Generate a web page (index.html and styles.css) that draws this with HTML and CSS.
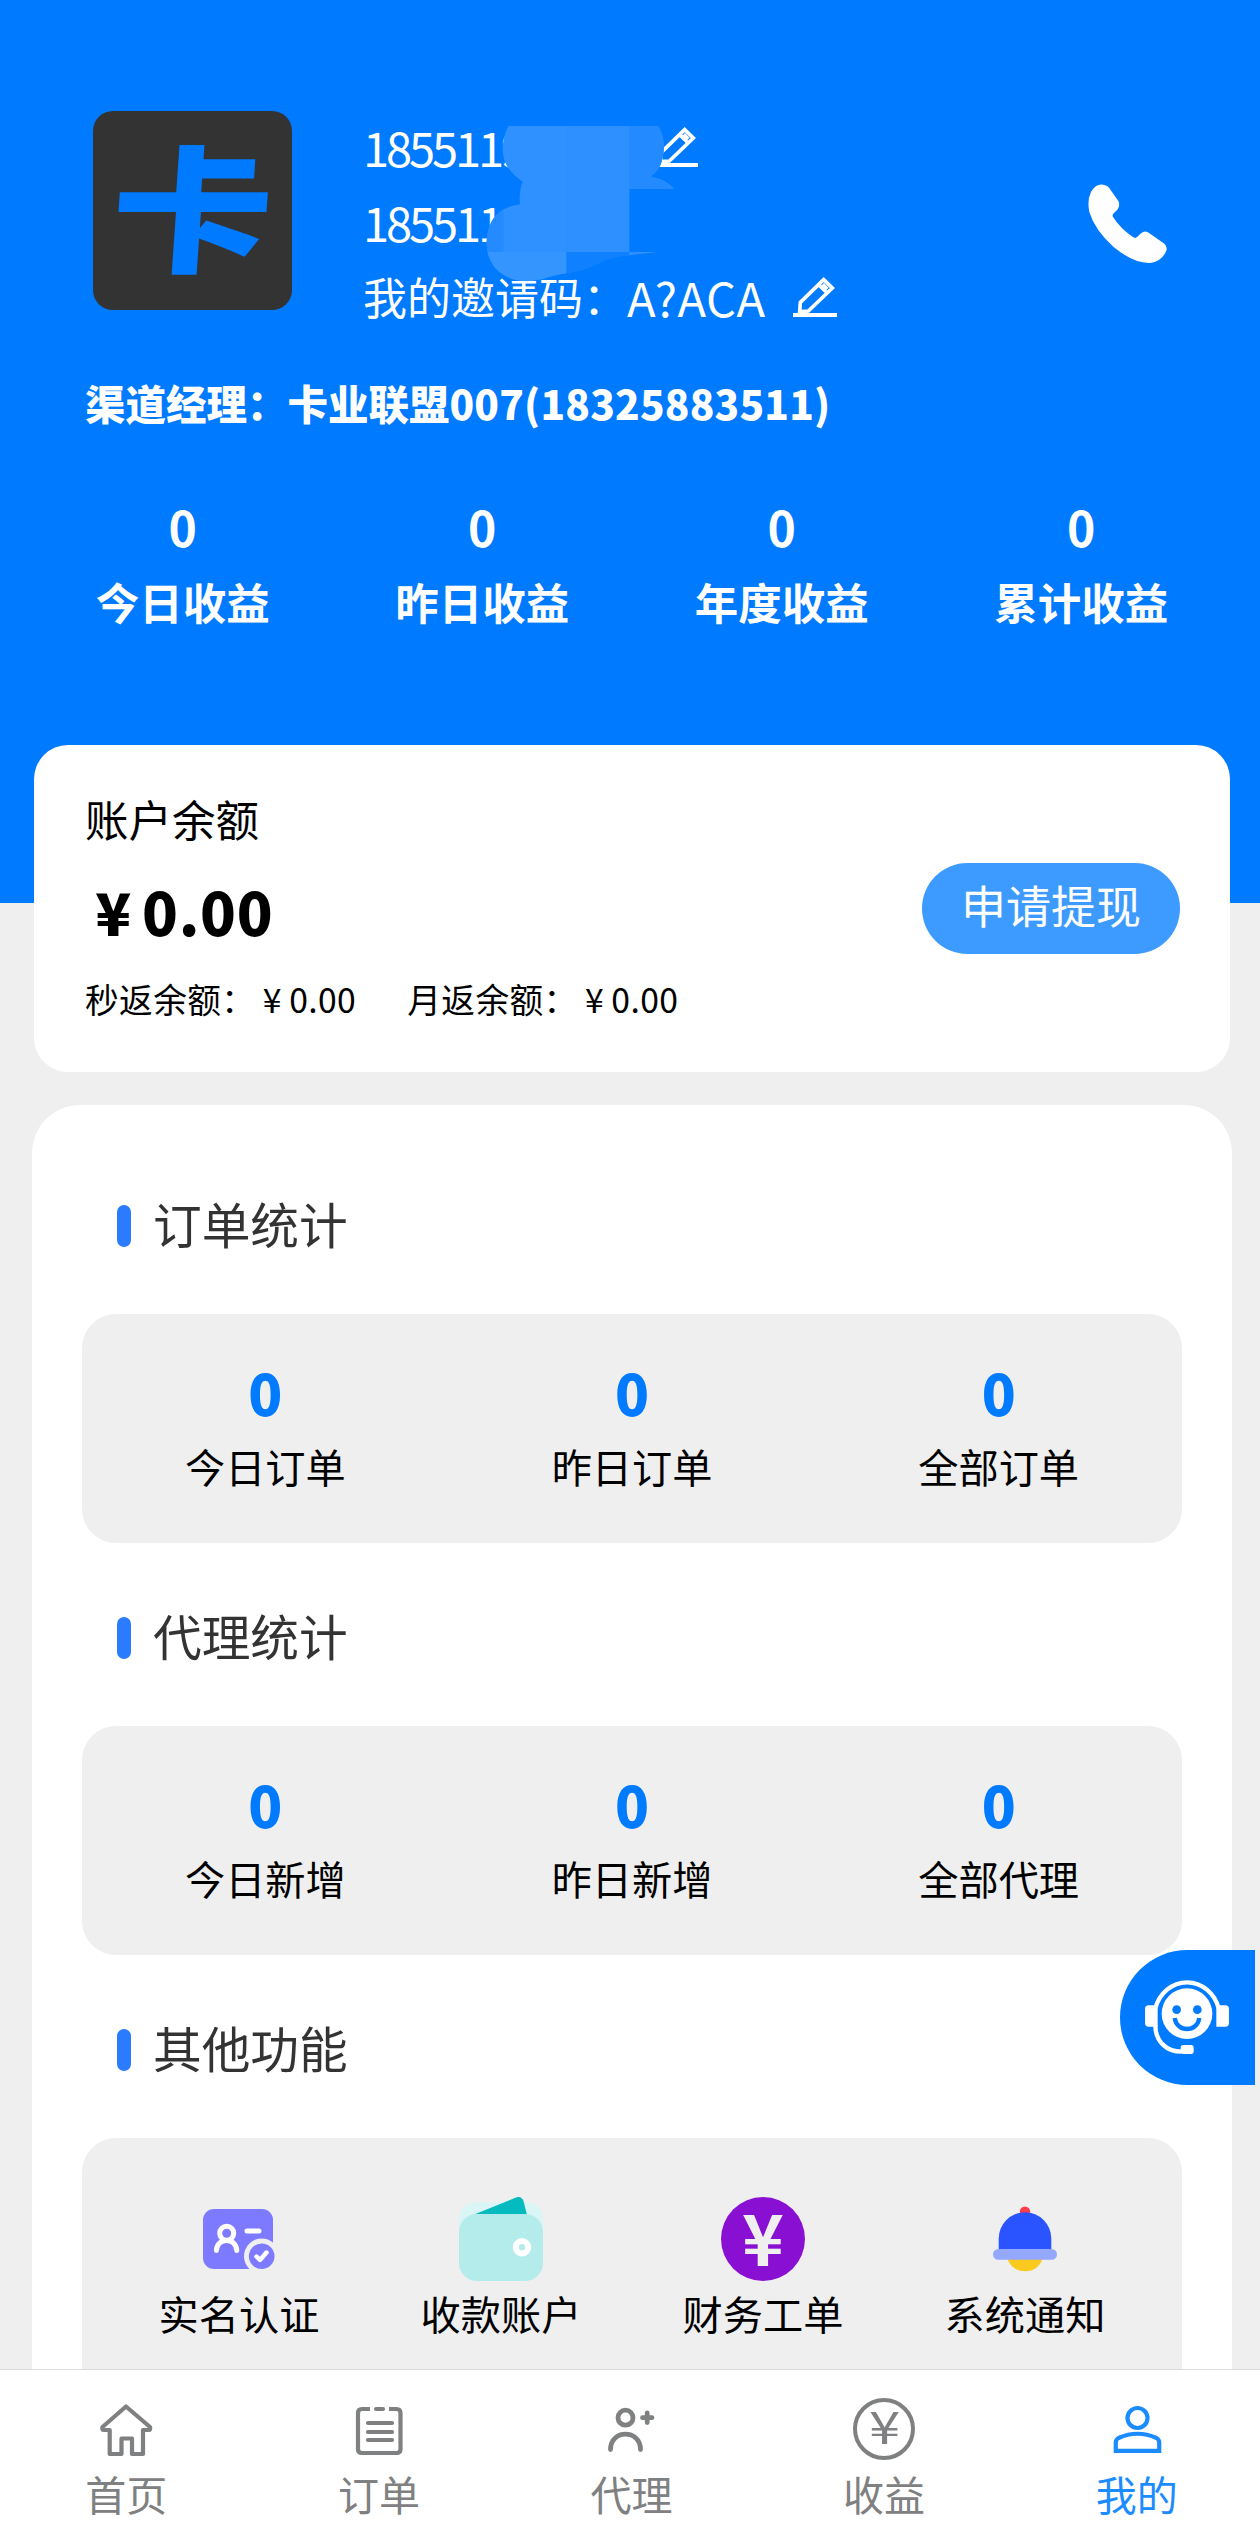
FILE: index.html
```html
<!DOCTYPE html>
<html lang="zh-CN">
<head>
    <meta charset="UTF-8">
    <meta name="viewport" content="width=device-width, initial-scale=1.0">
    <title>我的</title>
    <link rel="stylesheet" href="styles.css">
</head>
<body>

<div class="page">
    <header class="header">
        <div class="profile">
            <div class="avatar"><span>卡</span></div>
            <div class="info">
                <div class="info-line">
                    <span class="phone-text">1855119</span>
                    <svg class="edit" viewBox="0 0 132 120"><path d="M92 8L118 33L46 102L20 104L22 76ZM77 23L103 48M89 22L103 36" fill="none" stroke="#fff" stroke-width="11"/><rect y="108" width="132" height="12" fill="#fff"/></svg>
                </div>
                <div class="info-line"><span class="phone-text">185511</span></div>
                <div class="info-line">
                    <span>我的邀请码：</span><span class="code">A?ACA</span>
                    <svg class="edit" viewBox="0 0 132 120"><path d="M92 8L118 33L46 102L20 104L22 76ZM77 23L103 48M89 22L103 36" fill="none" stroke="#fff" stroke-width="11"/><rect y="108" width="132" height="12" fill="#fff"/></svg>
                </div>
                <!-- hides part of the phone number -->
                <svg class="mask" viewBox="80 108 570 468">
                    <clipPath id="blob"><path d="M147 108H597Q625 155 607 215Q600 240 574 260Q615 265 646 297H510V486H595Q560 490 510 496Q450 502 430 513Q390 538 321 550Q280 556 250 567Q180 585 130 553Q85 525 81 460Q85 355 182 343Q178 305 190 275Q130 235 130 180Q130 140 147 108Z"/></clipPath>
                    <g clip-path="url(#blob)">
                        <rect x="80" y="108" width="570" height="468" fill="#2f90ff"/>
                        <rect x="321" y="108" width="189" height="378" fill="#2e8fff"/>
                        <rect x="510" y="108" width="140" height="190" fill="#248aff"/>
                        <rect x="80" y="300" width="52" height="186" fill="#248aff"/>
                        <rect x="80" y="486" width="241" height="90" fill="#3595ff"/>
                        <rect x="321" y="486" width="189" height="90" fill="#0f80ff"/>
                    </g>
                </svg>
            </div>
            <svg class="call" viewBox="684 101 236 238"><path d="M742 108Q712 92 692 125Q680 150 687 185Q703 238 760 291Q820 340 870 339Q908 334 920 299Q920 286 912 280L868 249Q855 239 842 250L831 261Q826 266 818 261Q780 235 758 200Q756 196 759 191L772 178Q780 168 775 153L747 113Z" fill="#fff"/></svg>
        </div>

        <div class="manager">渠道经理：卡业联盟<span>007(18325883511)</span></div>

        <div class="income">
            <div class="income-item"><b>0</b><span>今日收益</span></div>
            <div class="income-item"><b>0</b><span>昨日收益</span></div>
            <div class="income-item"><b>0</b><span>年度收益</span></div>
            <div class="income-item"><b>0</b><span>累计收益</span></div>
        </div>
    </header>

    <section class="balance">
        <div>
            <div class="balance-title">账户余额</div>
            <div class="balance-amount"><span class="yen">¥</span>0.00</div>
            <div class="balance-sub">
                <span>秒返余额：<span class="yen">¥</span>0.00</span>
                <span>月返余额：<span class="yen">¥</span>0.00</span>
            </div>
        </div>
        <button class="withdraw">申请提现</button>
    </section>

    <main class="panel">
        <h2 class="title">订单统计</h2>
        <div class="box">
            <div class="count"><b>0</b><span>今日订单</span></div>
            <div class="count"><b>0</b><span>昨日订单</span></div>
            <div class="count"><b>0</b><span>全部订单</span></div>
        </div>

        <h2 class="title">代理统计</h2>
        <div class="box">
            <div class="count"><b>0</b><span>今日新增</span></div>
            <div class="count"><b>0</b><span>昨日新增</span></div>
            <div class="count"><b>0</b><span>全部代理</span></div>
        </div>

        <h2 class="title">其他功能</h2>
        <div class="box features">
            <div class="feature">
                <svg viewBox="0 0 84 84">
                    <rect x="6" y="12" width="70" height="60" rx="11" fill="#7d7aff"/>
                    <circle cx="64.7" cy="59.2" r="17.7" fill="#efefef"/>
                    <circle cx="64.7" cy="59.2" r="12.8" fill="#7d7aff"/>
                    <g fill="none" stroke="#fff" stroke-width="5" stroke-linecap="round" stroke-linejoin="round">
                        <circle cx="29.7" cy="36.3" r="7"/>
                        <path d="M19.4 53.5C20 40 39 40 39.8 53.5M50 34H62"/>
                        <path d="M59.5 59.5L63 63L69.5 55.5" stroke-width="4.4"/>
                    </g>
                </svg>
                <span>实名认证</span>
            </div>
            <div class="feature">
                <svg viewBox="0 0 84 84">
                    <rect y="5.5" width="84" height="60" rx="16" fill="#daf5f6"/>
                    <path d="M14 18L57 .5Q62-1.5 64.5 4L68.5 20H14Z" fill="#06bbbf"/>
                    <rect y="17" width="84" height="67" rx="18" fill="#b4ecec"/>
                    <circle cx="63" cy="50.2" r="6.2" fill="none" stroke="#fff" stroke-width="6"/>
                </svg>
                <span>收款账户</span>
            </div>
            <div class="feature">
                <div class="coin">¥</div>
                <span>财务工单</span>
            </div>
            <div class="feature">
                <svg viewBox="0 0 84 84">
                    <circle cx="42" cy="14.8" r="5.2" fill="#ff3b4a"/>
                    <path d="M24 61Q29 74.3 42 74.3Q55 74.3 60 61Z" fill="#fcca1e"/>
                    <path d="M15.7 54V41.5A26.3 26.3 0 0 1 68.3 41.5V54Z" fill="#2954ff"/>
                    <rect x="10" y="52" width="64" height="10.8" rx="5.4" fill="#95a8ff"/>
                </svg>
                <span>系统通知</span>
            </div>
        </div>
    </main>
</div>

<!-- Customer service button -->
<a class="service">
    <svg viewBox="315 240 252 222">
        <path d="M346 325C358 280 396 247 441 247S524 280 536 325M346 375C346 425 380 455 425 455" fill="none" stroke="#fff" stroke-width="13"/>
        <path d="M326 316H353V380H326Q315 380 315 369V327Q315 316 326 316ZM529 316H556Q567 316 567 327V369Q567 380 556 380H529Z" fill="#fff"/>
        <rect x="422" y="435" width="39" height="27" rx="8" fill="#fff"/>
        <circle cx="441" cy="341" r="76" fill="#fff"/>
        <circle cx="410" cy="329" r="13" fill="#007aff"/>
        <circle cx="472" cy="329" r="13" fill="#007aff"/>
        <path d="M404 354C410 398 472 398 478 354" fill="none" stroke="#007aff" stroke-width="13"/>
    </svg>
</a>

<nav class="tabbar">
    <a class="tab">
        <svg viewBox="0 0 64 64"><path d="M32 8.5L8.5 29Q7.5 32 10 32H15.7V56H27.5V40.5H38V56H49V32H54.5Q57 32 56 29Z"/></svg>
        <span>首页</span>
    </a>
    <a class="tab">
        <svg viewBox="0 0 64 64"><path d="M23 11H15Q11 11 11 15V51Q11 55 15 55H49.5Q53.5 55 53.5 51V15Q53.5 11 49.5 11H42" stroke-linecap="butt"/><path d="M29 11H36M21 25H45M21 34H45M21 42H45"/></svg>
        <span>订单</span>
    </a>
    <a class="tab">
        <svg viewBox="0 0 64 64"><g stroke-width="4.8"><circle cx="26.5" cy="19.7" r="7.5"/><path d="M11.5 51.5C11.5 31 41.5 31 41.5 51.5M43.5 19.7H53M48.2 15V24.5"/></g></svg>
        <span>代理</span>
    </a>
    <a class="tab">
        <div class="coin-line"><i>¥</i></div>
        <span>收益</span>
    </a>
    <a class="tab active">
        <svg viewBox="0 0 64 64"><circle cx="32.5" cy="20" r="10"/><path d="M10.8 52.8V44.5Q10.8 41.5 13.5 40Q32.5 31.5 51.5 40Q54.2 41.5 54.2 44.5V52.8Z" stroke-linejoin="miter"/></svg>
        <span>我的</span>
    </a>
</nav>

</body>
</html>
```
FILE: styles.css
```css
* {
    box-sizing: border-box;
}

body {
    margin: 0;
    height: 2545px;
    position: relative;
    overflow: hidden;
    background-color: #efefef;
    color: #000;
    font-family: "Noto Sans CJK SC", sans-serif;
}

svg {
    display: block;
    flex: none;
}

.page {
    width: 1264px;
    height: 2545px;
    overflow: hidden;
}

/* Header */
.header {
    height: 903px;
    padding-top: 111px;
    background-color: #007aff;
    color: #fff;
}

.profile {
    display: flex;
    height: 199px;
    padding-left: 93px;
    padding-right: 97px;
}

.avatar {
    width: 199px;
    height: 199px;
    border-radius: 20px;
    background-color: #333;
    color: #007aff;
    font-size: 152px;
    font-weight: 900;
    line-height: 184px;
    text-align: center;
}

.avatar span {
    display: inline-block;
    transform: skewX(-4deg) scale(1.06, 0.9);
}

.info {
    position: relative;
    margin: -2px auto 0 71px;
    font-size: 44px;
}

.info-line {
    display: flex;
    align-items: center;
    height: 75px;
    line-height: 75px;
    white-space: nowrap;
}

.phone-text {
    width: 291px;
    font-size: 47px;
    letter-spacing: -3.1px;
}

.code {
    width: 166px;
    font-size: 47px;
    letter-spacing: 0.5px;
}

.edit {
    width: 44px;
    height: 40px;
}

.mask {
    position: absolute;
    left: 123px;
    top: 17px;
    width: 190px;
    height: 156px;
}

.call {
    width: 79px;
    height: 79px;
    margin-top: 73px;
}

.manager {
    margin-top: 63px;
    padding-left: 85px;
    font-size: 40.5px;
    font-weight: 900;
    line-height: 60px;
}

.manager span {
    letter-spacing: 0.2px;
}

/* Income numbers */
.income {
    display: flex;
    margin-top: 63px;
    padding: 0 33px;
}

.income-item {
    flex: 1;
    display: flex;
    flex-direction: column;
    gap: 16px;
    text-align: center;
    font-size: 43.5px;
    font-weight: 700;
    line-height: 60px;
}

.income-item b {
    font-size: 48px;
    font-weight: 700;
}

/* Balance card */
.balance {
    display: flex;
    justify-content: space-between;
    align-items: center;
    height: 327px;
    margin: -158px 34px 0;
    padding: 0 50px 0 51px;
    border-radius: 34px;
    background-color: #fff;
}

.balance-title {
    margin-top: 2px;
    font-size: 43.5px;
    line-height: 60px;
}

.balance-amount {
    margin: 22px 0 23px;
    font-size: 59px;
    font-weight: 900;
    line-height: 80px;
    letter-spacing: 0.7px;
}

.balance-amount .yen {
    width: 57px;
}

.balance-sub {
    display: flex;
    gap: 51px;
    margin-bottom: 6px;
    font-size: 33.7px;
    line-height: 50px;
    letter-spacing: 0.4px;
}

.yen {
    display: inline-block;
    width: 1em;
    text-align: center;
}

.withdraw {
    width: 258px;
    height: 91px;
    padding: 0 0 8px;
    border: none;
    border-radius: 46px;
    background-color: #3d9bff;
    color: #fff;
    font-family: inherit;
    font-size: 45px;
    line-height: 60px;
}

/* Main panel */
.panel {
    height: 1500px;
    margin: 33px 32px 0;
    padding: 26px 50px 0;
    border-radius: 48px;
    background-color: #fff;
}

.title {
    display: flex;
    align-items: center;
    height: 60px;
    margin: 63px 0 60px;
    padding: 0 0 2px 35px;
    color: #333;
    font-size: 48.7px;
    font-weight: 400;
    line-height: 58px;
}

.title::before {
    content: "";
    width: 14px;
    height: 42px;
    margin: 5px 22px 0 0;
    border-radius: 7px;
    background-color: #2b7bff;
}

.box {
    display: flex;
    height: 229px;
    padding-top: 43px;
    border-radius: 34px;
    background-color: #efefef;
}

.count {
    flex: 1;
    display: flex;
    flex-direction: column;
    gap: 14px;
    text-align: center;
    font-size: 40.2px;
    line-height: 50px;
}

.count b {
    color: #007aff;
    font-size: 56px;
    font-weight: 900;
    line-height: 70px;
}

.features {
    height: 400px;
    padding: 59px 26px 0;
}

.feature {
    flex: 1;
    display: flex;
    flex-direction: column;
    align-items: center;
    gap: 7px;
    font-size: 40.2px;
    line-height: 50px;
}

.feature svg {
    width: 84px;
    height: 84px;
}

.coin {
    width: 84px;
    height: 84px;
    border-radius: 50%;
    background-color: #8910d2;
    color: #efefef;
    font-size: 71px;
    font-weight: 700;
    line-height: 76px;
    text-align: center;
}

/* Customer service */
.service {
    position: absolute;
    right: 5px;
    top: 1950px;
    display: flex;
    width: 135px;
    height: 135px;
    padding: 30px 0 0 25px;
    border-radius: 68px 0 0 68px;
    background-color: #007aff;
}

.service svg {
    width: 84px;
    height: 74px;
}

/* Bottom tabs */
.tabbar {
    position: absolute;
    left: 0;
    bottom: 0;
    display: flex;
    width: 1263px;
    height: 176px;
    padding-top: 28px;
    border-top: 1px solid #dcdcdc;
    background-color: #fff;
}

.tab {
    flex: 1;
    display: flex;
    flex-direction: column;
    align-items: center;
    gap: 6px;
    color: #7f8081;
    font-size: 41px;
    line-height: 50px;
}

.tab.active {
    color: #1a8cff;
}

.tab svg {
    width: 64px;
    height: 64px;
    fill: none;
    stroke: currentColor;
    stroke-width: 4.2;
    stroke-linecap: round;
    stroke-linejoin: round;
}

.coin-line {
    width: 62px;
    height: 62px;
    margin: 0 0 2px;
    border: 4px solid currentColor;
    border-radius: 50%;
    font-size: 45px;
    line-height: 46px;
    text-align: center;
}

.coin-line i {
    display: inline-block;
    font-style: normal;
    transform: scaleX(1.25);
}
```
